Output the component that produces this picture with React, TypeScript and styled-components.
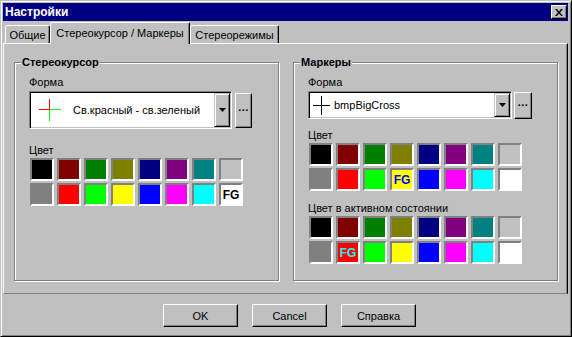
import styled, { createGlobalStyle } from "styled-components"

const GlobalStyle = createGlobalStyle`
	html, body {
		margin: 0;
		padding: 0;
		background: #c0c0c0;
	}
	body {
		font-family: "Liberation Sans", Arial, sans-serif;
		font-size: 11px;
		color: #000;
	}
	* {
		box-sizing: border-box;
	}
`

const swatchColors = [
	"#000000", "#800000", "#008000", "#808000", "#000080", "#800080", "#008080", "#c0c0c0",
	"#808080", "#ff0000", "#00ff00", "#ffff00", "#0000ff", "#ff00ff", "#00ffff", "#ffffff",
]

function CloseIcon() {
	return (
		<svg width="8" height="7" viewBox="0 0 8 7">
			<path d="M0 0h2l2 2.5 2-2.5h2l-3 3.5 3 3.5h-2l-2-2.5-2 2.5h-2l3-3.5z" fill="#000" />
		</svg>
	)
}

function ArrowIcon() {
	return (
		<svg width="7" height="4" viewBox="0 0 7 4">
			<polygon points="0,0 7,0 3.5,4" fill="#000" />
		</svg>
	)
}

function StereoCross() {
	return (
		<svg width="22" height="22" viewBox="0 0 22 22" shapeRendering="crispEdges">
			<rect x="0" y="10" width="11" height="1" fill="#ff0000" />
			<rect x="11" y="10" width="11" height="1" fill="#00ff00" />
			<rect x="10" y="0" width="1" height="11" fill="#ff0000" />
			<rect x="10" y="11" width="1" height="11" fill="#00ff00" />
		</svg>
	)
}

function BigCross() {
	return (
		<svg width="17" height="19" viewBox="0 0 17 19" shapeRendering="crispEdges">
			<rect x="0" y="9" width="17" height="1" fill="#000" />
			<rect x="8" y="0" width="1" height="19" fill="#000" />
		</svg>
	)
}

function ColorGrid({ fgIndex, fgColor }: { fgIndex: number; fgColor: string }) {
	return (
		<Grid>
			{swatchColors.map((c, i) => (
				<Swatch key={i} $color={c}>
					{i === fgIndex ? <FgMark $color={fgColor}>FG</FgMark> : null}
				</Swatch>
			))}
		</Grid>
	)
}

export default function App() {
	return (
		<>
			<GlobalStyle />
			<Window>
				<TitleBar>
					<span>Настройки</span>
					<CloseButton>
						<CloseIcon />
					</CloseButton>
				</TitleBar>

				<TabStrip>
					<Tab $width={45}>Общие</Tab>
					<Tab $width={140} $active>
						Стереокурсор / Маркеры
					</Tab>
					<Tab $width={89}>Стереорежимы</Tab>
				</TabStrip>

				<Panel>
					<Group>
						<Legend>Стереокурсор</Legend>
						<Label>Форма</Label>
						<ComboRow $gap={3}>
							<Combo $width={203} $height={38}>
								<ComboValue $iconGap={12} $indent={8}>
									<StereoCross />
									<span>Св.красный - св.зеленый</span>
								</ComboValue>
								<DropButton>
									<ArrowIcon />
								</DropButton>
							</Combo>
							<MoreButton $width={17} $height={35}>
								...
							</MoreButton>
						</ComboRow>
						<Label $top={14}>Цвет</Label>
						<ColorGrid fgIndex={15} fgColor="#000000" />
					</Group>

					<Group>
						<Legend>Маркеры</Legend>
						<Label>Форма</Label>
						<ComboRow $gap={2}>
							<Combo $width={204} $height={28}>
								<ComboValue $iconGap={4} $indent={3}>
									<BigCross />
									<span>bmpBigCross</span>
								</ComboValue>
								<DropButton>
									<ArrowIcon />
								</DropButton>
							</Combo>
							<MoreButton $width={18} $height={27}>
								...
							</MoreButton>
						</ComboRow>
						<Label $top={9}>Цвет</Label>
						<ColorGrid fgIndex={11} fgColor="#0000ff" />
						<Label $top={10}>Цвет в активном состоянии</Label>
						<ColorGrid fgIndex={9} fgColor="#00ffff" />
					</Group>
				</Panel>

				<ButtonRow>
					<PushButton>OK</PushButton>
					<PushButton>Cancel</PushButton>
					<PushButton>Справка</PushButton>
				</ButtonRow>
			</Window>
		</>
	)
}

const Window = styled.div`
	width: 572px;
	height: 337px;
	display: flex;
	flex-direction: column;
	background: #c0c0c0;
	border: 1px solid;
	border-color: #c0c0c0 #000 #000 #c0c0c0;
	box-shadow: inset 1px 1px #fff, inset -1px -1px #808080;
	padding: 2px 3px 2px 2px;
`

const TitleBar = styled.div`
	height: 18px;
	flex-shrink: 0;
	display: flex;
	align-items: center;
	justify-content: space-between;
	padding: 0 1px 0 2px;
	background: #000080;
	color: #fff;
	font-weight: bold;
	font-size: 12px;
`

const CloseButton = styled.div`
	width: 16px;
	height: 14px;
	display: flex;
	align-items: center;
	justify-content: center;
	background: #c0c0c0;
	border: 1px solid;
	border-color: #fff #000 #000 #fff;
	box-shadow: inset -1px -1px #808080;
`

const TabStrip = styled.div`
	height: 21px;
	margin-top: 1px;
	flex-shrink: 0;
	display: flex;
	align-items: flex-end;
	padding-left: 2px;
	position: relative;
	z-index: 2;
`

const Tab = styled.div<{ $width: number; $active?: boolean }>`
	width: ${(p) => p.$width}px;
	height: ${(p) => (p.$active ? 22 : 18)}px;
	margin-bottom: ${(p) => (p.$active ? -1 : 0)}px;
	display: flex;
	align-items: center;
	justify-content: center;
	padding-bottom: ${(p) => (p.$active ? 1 : 0)}px;
	background: #c0c0c0;
	border: 1px solid;
	border-bottom: none;
	border-color: #fff #000 transparent #fff;
	border-radius: 2px 2px 0 0;
	box-shadow: inset -1px 0 #808080;
	white-space: nowrap;
`

const Panel = styled.div`
	height: 251px;
	flex-shrink: 0;
	display: flex;
	gap: 14px;
	padding: 12px 9px 12px 10px;
	border: 1px solid;
	border-color: #fff #000 #808080 #fff;
	box-shadow: inset -1px 0 #808080;
`

const Group = styled.fieldset`
	width: 265px;
	margin: 0;
	min-width: 0;
	display: flex;
	flex-direction: column;
	align-items: flex-start;
	padding: 6px 14px 0 14px;
	border: 1px solid #808080;
	box-shadow: inset 1px 1px #fff, 1px 1px #fff;
`

const Legend = styled.legend`
	margin-left: -8px;
	padding: 0 1px;
	line-height: 13px;
	font-weight: bold;
	background: #c0c0c0;
`

const Label = styled.div<{ $top?: number }>`
	line-height: 14px;
	height: 14px;
	margin-top: ${(p) => p.$top ?? 0}px;
	margin-bottom: 1px;
	white-space: nowrap;
`

const ComboRow = styled.div<{ $gap: number }>`
	display: flex;
	align-items: center;
	gap: ${(p) => p.$gap}px;
	margin-top: 1px;
`

const Combo = styled.div<{ $width: number; $height: number }>`
	width: ${(p) => p.$width}px;
	height: ${(p) => p.$height}px;
	display: flex;
	background: #fff;
	border: 1px solid;
	border-color: #808080 #fff #fff #808080;
	box-shadow: inset 1px 1px #000, inset -1px -1px #c0c0c0;
	padding: 1px;
`

const ComboValue = styled.div<{ $iconGap: number; $indent: number }>`
	flex: 1;
	display: flex;
	align-items: center;
	gap: ${(p) => p.$iconGap}px;
	padding-left: ${(p) => p.$indent}px;
	white-space: nowrap;
`

const DropButton = styled.div`
	width: 16px;
	display: flex;
	align-items: center;
	justify-content: center;
	background: #c0c0c0;
	border: 1px solid;
	border-color: #c0c0c0 #000 #000 #c0c0c0;
	box-shadow: inset 1px 1px #fff, inset -1px -1px #808080;
`

const MoreButton = styled.div<{ $width: number; $height: number }>`
	width: ${(p) => p.$width}px;
	height: ${(p) => p.$height}px;
	display: flex;
	align-items: center;
	justify-content: center;
	padding-bottom: 7px;
	font-weight: bold;
	letter-spacing: 0.5px;
	background: #c0c0c0;
	border: 1px solid;
	border-color: #fff #000 #000 #fff;
	box-shadow: inset -1px -1px #808080;
`

const Grid = styled.div`
	display: grid;
	grid-template-columns: repeat(8, 24px);
	grid-auto-rows: 23px;
	gap: 2px 3px;
	margin-left: 1px;
`

const Swatch = styled.div<{ $color: string }>`
	display: flex;
	align-items: center;
	justify-content: center;
	background: ${(p) => p.$color};
	border: 2px solid;
	border-color: #808080 #fff #fff #808080;
`

const FgMark = styled.span<{ $color: string }>`
	font-size: 12px;
	font-weight: bold;
	color: ${(p) => p.$color};
	line-height: 1;
`

const ButtonRow = styled.div`
	flex: 1;
	display: flex;
	justify-content: center;
	align-items: flex-start;
	gap: 14px;
	padding: 10px 0 0 8px;
`

const PushButton = styled.div`
	width: 75px;
	height: 23px;
	display: flex;
	align-items: center;
	justify-content: center;
	background: #c0c0c0;
	border: 1px solid;
	border-color: #fff #000 #000 #fff;
	box-shadow: inset -1px -1px #808080;
`
